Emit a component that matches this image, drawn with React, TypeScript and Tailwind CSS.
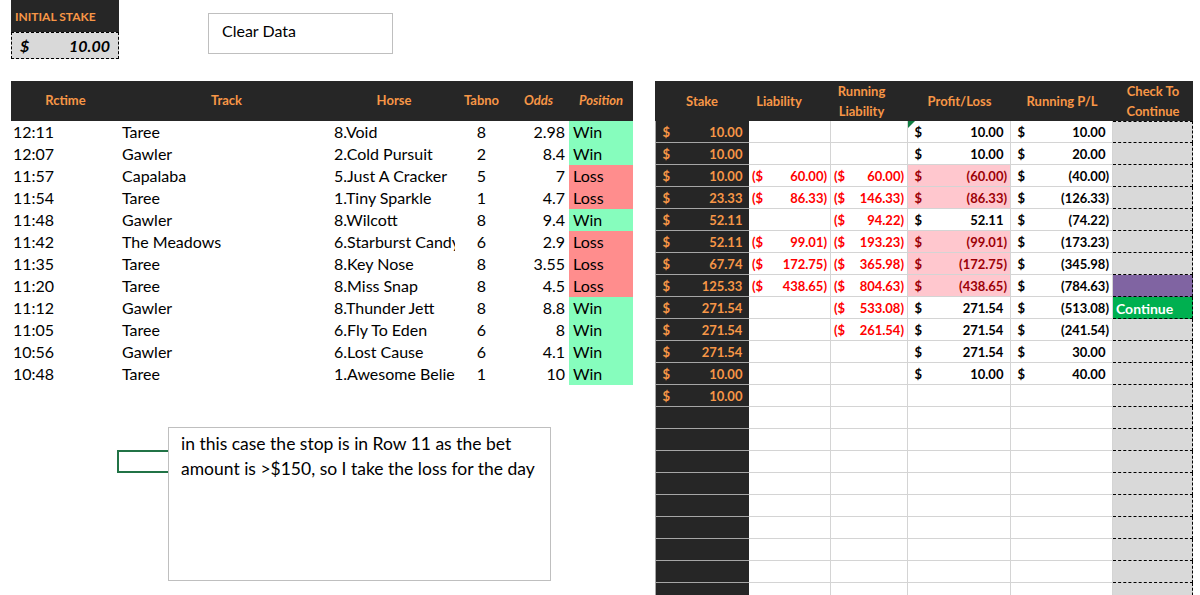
import React from 'react'

type Race = {
  time: string
  track: string
  horse: string
  tab: string
  odds: string
  pos: 'Win' | 'Loss'
}

type Bet = {
  stake?: string
  liab?: string
  runLiab?: string
  pl?: string
  plLoss?: boolean
  run?: string
  runNeg?: boolean
  check?: 'stop' | 'go'
}

const races: Race[] = [
  { time: '12:11', track: 'Taree', horse: '8.Void', tab: '8', odds: '2.98', pos: 'Win' },
  { time: '12:07', track: 'Gawler', horse: '2.Cold Pursuit', tab: '2', odds: '8.4', pos: 'Win' },
  { time: '11:57', track: 'Capalaba', horse: '5.Just A Cracker', tab: '5', odds: '7', pos: 'Loss' },
  { time: '11:54', track: 'Taree', horse: '1.Tiny Sparkle', tab: '1', odds: '4.7', pos: 'Loss' },
  { time: '11:48', track: 'Gawler', horse: '8.Wilcott', tab: '8', odds: '9.4', pos: 'Win' },
  { time: '11:42', track: 'The Meadows', horse: '6.Starburst Candy', tab: '6', odds: '2.9', pos: 'Loss' },
  { time: '11:35', track: 'Taree', horse: '8.Key Nose', tab: '8', odds: '3.55', pos: 'Loss' },
  { time: '11:20', track: 'Taree', horse: '8.Miss Snap', tab: '8', odds: '4.5', pos: 'Loss' },
  { time: '11:12', track: 'Gawler', horse: '8.Thunder Jett', tab: '8', odds: '8.8', pos: 'Win' },
  { time: '11:05', track: 'Taree', horse: '6.Fly To Eden', tab: '6', odds: '8', pos: 'Win' },
  { time: '10:56', track: 'Gawler', horse: '6.Lost Cause', tab: '6', odds: '4.1', pos: 'Win' },
  { time: '10:48', track: 'Taree', horse: '1.Awesome Believer', tab: '1', odds: '10', pos: 'Win' },
]

const filled: Bet[] = [
  { stake: '10.00', pl: '10.00', run: '10.00' },
  { stake: '10.00', pl: '10.00', run: '20.00' },
  { stake: '10.00', liab: '60.00', runLiab: '60.00', pl: '60.00', plLoss: true, run: '40.00', runNeg: true },
  { stake: '23.33', liab: '86.33', runLiab: '146.33', pl: '86.33', plLoss: true, run: '126.33', runNeg: true },
  { stake: '52.11', runLiab: '94.22', pl: '52.11', run: '74.22', runNeg: true },
  { stake: '52.11', liab: '99.01', runLiab: '193.23', pl: '99.01', plLoss: true, run: '173.23', runNeg: true },
  { stake: '67.74', liab: '172.75', runLiab: '365.98', pl: '172.75', plLoss: true, run: '345.98', runNeg: true },
  { stake: '125.33', liab: '438.65', runLiab: '804.63', pl: '438.65', plLoss: true, run: '784.63', runNeg: true, check: 'stop' },
  { stake: '271.54', runLiab: '533.08', pl: '271.54', run: '513.08', runNeg: true, check: 'go' },
  { stake: '271.54', runLiab: '261.54', pl: '271.54', run: '241.54', runNeg: true },
  { stake: '271.54', pl: '271.54', run: '30.00' },
  { stake: '10.00', pl: '10.00', run: '40.00' },
  { stake: '10.00' },
]

// pad the sheet down to the bottom of the window
const bets: Bet[] = [...filled, ...Array.from({ length: 9 }, () => ({}))]

// accounting format: "($" ... "60.00)" (outer) or "$" ... "(60.00)" (inner)
const Money = ({ value, wrap }: { value?: string; wrap?: 'outer' | 'inner' }) => {
  if (!value) return null
  return (
    <div className="flex w-full justify-between px-[3px] pt-[2px]">
      <span>
        <span className={wrap === 'outer' ? '' : 'invisible'}>(</span>$
      </span>
      <span>
        {wrap === 'inner' && '('}
        {value}
        <span className={wrap ? '' : 'invisible'}>)</span>
      </span>
    </div>
  )
}

const cell = 'flex h-[22px] items-center border-r border-b border-[#d4d4d4]'

export default function App() {
  return (
    <div className="h-[595px] w-[1200px] overflow-hidden bg-white font-['Lato','Liberation_Sans',sans-serif] text-black">
      {/* Top controls */}
      <div className="flex h-[81px] items-start">
        <div className="ml-[11px] w-[108px]">
          <div className="flex h-[32px] items-center bg-[#262626] pl-[4px] pt-[2px] text-[12px] font-bold text-[#f79646]">
            INITIAL STAKE
          </div>
          <div className="flex h-[27px] items-center justify-between border border-dashed border-black bg-[#d9d9d9] px-[8px] text-[16px] font-bold italic">
            <span>$</span>
            <span>10.00</span>
          </div>
        </div>
        <div className="ml-[89px] mt-[13px] flex h-[41px] w-[185px] items-center border border-[#bfbfbf] pb-[5px] pl-[13px] text-[16px]">
          Clear Data
        </div>
      </div>

      <div className="flex items-start">
        {/* Race results */}
        <div className="ml-[11px] w-[622px]">
          <div className="flex h-[40px] items-center bg-[#262626] text-[13px] font-bold text-[#f79646]">
            <div className="w-[109px] text-center">Rctime</div>
            <div className="w-[213px] text-center">Track</div>
            <div className="w-[122px] text-center">Horse</div>
            <div className="w-[53px] text-center">Tabno</div>
            <div className="w-[61px] text-center italic">Odds</div>
            <div className="w-[64px] text-center italic">Position</div>
          </div>
          {races.map((r) => (
            <div key={r.time} className="flex h-[22px] items-center text-[16px]">
              <div className="w-[109px] pl-[2px]">{r.time}</div>
              <div className="w-[213px] pl-[2px]">{r.track}</div>
              <div className="w-[122px] overflow-hidden whitespace-nowrap pl-[1px]">{r.horse}</div>
              <div className="w-[53px] text-center">{r.tab}</div>
              <div className="w-[61px] pr-[4px] text-right">{r.odds}</div>
              <div
                className={`flex h-full w-[64px] items-center pl-[4px] ${
                  r.pos === 'Win' ? 'bg-[#86fdbd]' : 'bg-[#ff8d8d]'
                }`}
              >
                {r.pos}
              </div>
            </div>
          ))}

          {/* note */}
          <div className="mt-[42px] flex items-start">
            <div className="ml-[106px] mt-[23px] h-[23px] w-[51px] border-2 border-r-0 border-[#217346]" />
            <div className="h-[154px] w-[383px] border border-[#bfbfbf] px-[12px] pt-[3px] text-[17.5px] leading-[25px]">
              in this case the stop is in Row 11 as the bet amount is &gt;$150, so I take the loss for the day
            </div>
          </div>
        </div>

        {/* Staking plan */}
        <div className="ml-[22px] w-[538px]">
          <div className="flex h-[40px] items-center bg-[#262626] text-[13px] font-bold leading-[20px] text-[#f79646]">
            <div className="w-[94px] text-center">Stake</div>
            <div className="w-[82px] pr-[22px] text-center">Liability</div>
            <div className="w-[77px] pr-[16px] text-center">
              Running
              <br />
              Liability
            </div>
            <div className="w-[103px] text-center">Profit/Loss</div>
            <div className="w-[102px] text-center">Running P/L</div>
            <div className="w-[80px] text-center">
              Check To
              <br />
              Continue
            </div>
          </div>
          {bets.map((b, i) => (
            <div key={i} className="flex text-[13px] font-bold">
              <div className="flex h-[22px] w-[94px] items-center border-b border-l border-[#a6a6a6] bg-[#262626] text-[#f79646]">
                <Money value={b.stake} />
              </div>
              <div className={`${cell} w-[82px] text-[#ff0000]`}>
                <Money value={b.liab} wrap="outer" />
              </div>
              <div className={`${cell} w-[77px] text-[#ff0000]`}>
                <Money value={b.runLiab} wrap="outer" />
              </div>
              <div
                className={`${cell} relative w-[103px] ${
                  b.plLoss ? 'bg-[#ffc7ce] text-[#9c0006]' : ''
                }`}
              >
                {i === 0 && (
                  <div className="absolute left-0 top-0 h-0 w-0 border-r-[7px] border-t-[7px] border-r-transparent border-t-[#107c41]" />
                )}
                <Money value={b.pl} wrap={b.plLoss ? 'inner' : undefined} />
              </div>
              <div className={`${cell} w-[102px]`}>
                <Money value={b.run} wrap={b.runNeg ? 'inner' : undefined} />
              </div>
              <div
                className={`flex h-[22px] w-[80px] items-center border-r border-b border-dashed border-black pl-[3px] pt-[2px] ${
                  i === 0 ? 'border-t' : ''
                } ${
                  b.check === 'stop'
                    ? 'bg-[#8064a2]'
                    : b.check === 'go'
                    ? 'bg-[#00b050] text-[14px] text-white'
                    : 'bg-[#d9d9d9]'
                }`}
              >
                {b.check === 'go' && 'Continue'}
              </div>
            </div>
          ))}
        </div>
      </div>
    </div>
  )
}
